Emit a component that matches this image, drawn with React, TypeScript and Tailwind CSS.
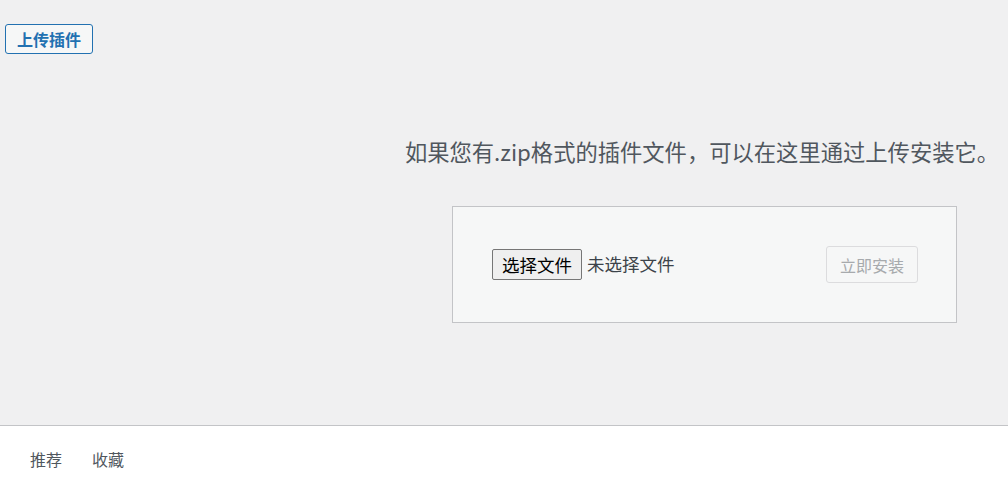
const FONT = "font-['Noto_Sans_CJK_SC','Noto_Sans',sans-serif]";

export default function App() {
  return (
    <div className={`w-[1008px] h-[479px] overflow-hidden bg-[#f0f0f1] flex flex-col ${FONT}`}>
      {/* Upload plugin area */}
      <div className="h-[425px] shrink-0">
        <div className="pt-[24px] pl-[5px]">
          <button className="h-[30px] w-[88px] rounded-[3px] border border-[#2271b1] bg-[#f6f7f7] text-[#2271b1] text-[16px] font-bold leading-none flex items-center justify-center">
            上传插件
          </button>
        </div>

        <div className="flex justify-center pl-[396px] mt-[82px]">
          <p className="text-[22.3px] leading-[30px] text-[#50575e] whitespace-nowrap">
            如果您有.zip格式的插件文件，可以在这里通过上传安装它。
          </p>
        </div>

        <div className="flex justify-center pl-[401px] mt-[40px]">
          <div className="w-[505px] h-[117px] border border-[#c3c4c7] bg-[#f6f7f7] flex items-center justify-between pl-[39px] pr-[38px]">
            <div className="flex items-center gap-[5px]">
              <span className="h-[31px] w-[90px] rounded-[2px] border border-[#767676] bg-[#efefef] text-black text-[17.5px] leading-none flex items-center justify-center">
                选择文件
              </span>
              <span className="text-[17.5px] text-[#3c434a]">未选择文件</span>
            </div>
            <button
              disabled
              className="h-[37px] w-[92px] rounded-[3px] border border-[#dcdcde] bg-[#f6f7f7] text-[#a7aaad] text-[16px] leading-none flex items-center justify-center"
            >
              立即安装
            </button>
          </div>
        </div>
      </div>

      {/* Tabs */}
      <div className="flex-1 bg-white border-t border-[#c3c4c7]">
        <div className="flex gap-[30px] pl-[30px] pt-[21px] text-[16px] text-[#50575e]">
          <span>推荐</span>
          <span>收藏</span>
        </div>
      </div>
    </div>
  );
}
